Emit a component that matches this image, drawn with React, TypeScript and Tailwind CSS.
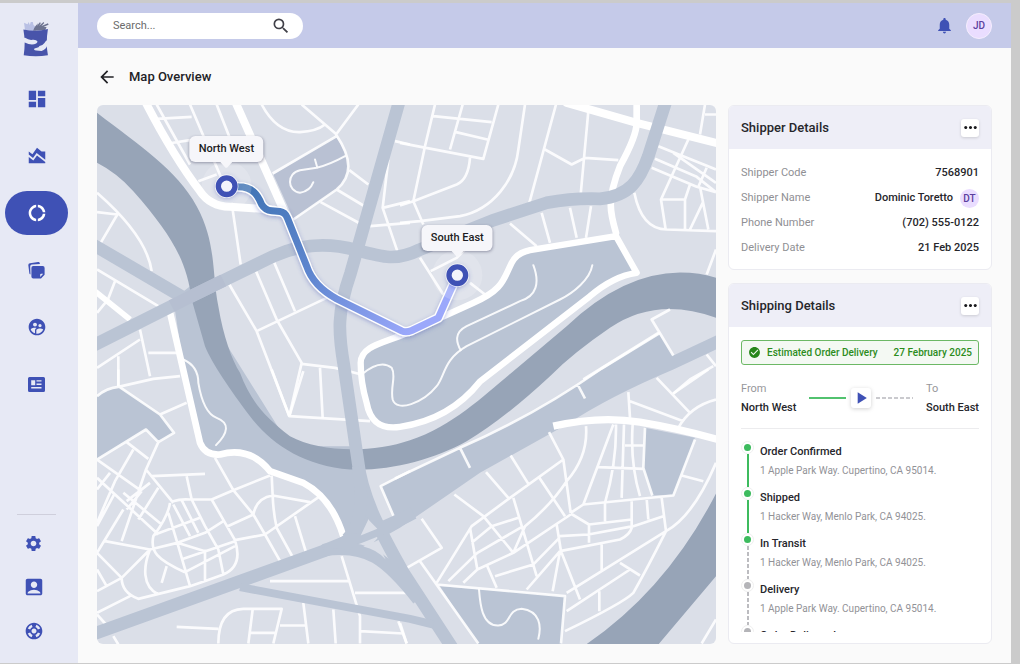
import type { ReactNode } from "react";
import {
  MdAccountBox,
  MdAreaChart,
  MdArrowBack,
  MdCheckCircle,
  MdDashboard,
  MdDonutLarge,
  MdMoreHoriz,
  MdNotifications,
  MdPlayArrow,
  MdSearch,
  MdSettings,
  MdSupervisedUserCircle,
  MdSupport,
} from "react-icons/md";

function Logo() {
  return (
    <svg viewBox="70 60 80 110" className="h-[37px] w-[27px]" aria-hidden="true">
      <path d="M76 92 73 68l10 5 4-7 3 9 3-9h6l2 9 6 4 2 15z" fill="#b9c0e4" />
      <path d="M100 92c4-12 10-17 15-22l-4 8 9-11 3 2-5 8 13-11 2 3-8 9 19-8 2 4-15 6 9 1-4 9z" fill="#6d7390" />
      <path d="M71 88q37 8 73-1-7 42 0 78-36 6-72 0 6-40-1-77z" fill="#4854aa" />
      <path d="M70 113l6 0q12 8 22 6 12-1 15 5 0 3-4 6-14 7-34-3l-5 1z" fill="#e7e9f5" />
      <path d="M147 119q-10 1-14 10-6 8-14 8l-3 4-12 4q-4 5 5 6l16 1q14-4 17-16l5-1z" fill="#e7e9f5" />
    </svg>
  );
}

function NotesIcon() {
  return (
    <svg viewBox="0 0 17 17" className="size-[17px]" fill="currentColor" aria-hidden="true">
      <path d="M.3 3.1A2 2 0 0 1 2 1.2L10 0a1.500 1.500 0 0 1 1.800 1.200l.1.700-8 .6a2 2 0 0 0-1.700 2l.3 8.100A1.700 1.700 0 0 1 1.300 11z" />
      <path
        fillRule="evenodd"
        d="M5.300 4h9.400A1.900 1.900 0 0 1 16.600 6v6.700L13 16.400H5.300a1.900 1.900 0 0 1-1.900-1.900V6A1.900 1.900 0 0 1 5.300 4zm6.900 10.900 3-3.200h-2.100a.9.9 0 0 0-.9.900z"
      />
    </svg>
  );
}

function NewsIcon() {
  return (
    <svg viewBox="0 0 17 15" className="h-[15px] w-[17px]" fill="currentColor" aria-hidden="true">
      <path
        fillRule="evenodd"
        d="M1.500 0h14A1.500 1.500 0 0 1 17 1.500v12a1.500 1.500 0 0 1-1.500 1.500h-14A1.500 1.500 0 0 1 0 13.500v-12A1.500 1.500 0 0 1 1.500 0zM3.200 3.200v5h4v-5zm5.300 0v1.400h5V3.200zm0 3.300v1.400h5V6.500zM3.200 10v1.400h10.300V10z"
      />
    </svg>
  );
}

const primaryNav: { label: string; icon: ReactNode; active?: boolean }[] = [
  { label: "Dashboard", icon: <MdDashboard size={22} /> },
  { label: "Analytics", icon: <MdAreaChart size={22} /> },
  { label: "Tracking", icon: <MdDonutLarge size={20} />, active: true },
  { label: "Notes", icon: <NotesIcon /> },
  { label: "Team", icon: <MdSupervisedUserCircle size={20} /> },
  { label: "News", icon: <NewsIcon /> },
];

const secondaryNav: { label: string; icon: ReactNode }[] = [
  { label: "Settings", icon: <MdSettings size={19} /> },
  { label: "Account", icon: <MdAccountBox size={22} /> },
  { label: "Support", icon: <MdSupport size={20} /> },
];

function Sidebar() {
  return (
    <aside className="flex w-[78px] shrink-0 flex-col bg-[#e7e9f5] pb-[10px] text-[#3f51b5]">
      <a href="#home" aria-label="Home" className="mt-[17px] ml-[23px] w-[27px]">
        <Logo />
      </a>
      <nav aria-label="Primary" className="mt-5 flex flex-col gap-[13px] pl-[5px]">
        {primaryNav.map((item) => (
          <a
            key={item.label}
            href={"#" + item.label.toLowerCase()}
            aria-label={item.label}
            aria-current={item.active ? "page" : undefined}
            className={
              item.active
                ? "flex h-11 w-[63px] items-center justify-center rounded-full bg-[#3f51b5] text-white"
                : "flex h-11 w-[63px] items-center justify-center rounded-full"
            }
          >
            {item.icon}
          </a>
        ))}
      </nav>
      <nav aria-label="Secondary" className="mt-auto flex flex-col">
        <hr className="mb-[6px] ml-[17px] w-[39px] border-[#cfcfdc]" />
        {secondaryNav.map((item) => (
          <a
            key={item.label}
            href={"#" + item.label.toLowerCase()}
            aria-label={item.label}
            className="flex h-11 w-[67px] items-center justify-center"
          >
            {item.icon}
          </a>
        ))}
      </nav>
    </aside>
  );
}

function Header() {
  return (
    <header className="flex h-[45px] shrink-0 items-center bg-[#c5cae9] px-[19px]">
      <form className="flex h-[26px] w-[206px] items-center rounded-full bg-white pr-3 pl-4" onSubmit={(e) => e.preventDefault()}>
        <input
          aria-label="Search"
          placeholder="Search..."
          className="h-full min-w-0 flex-1 bg-transparent text-[11px] leading-[26px] text-[#222] outline-none placeholder:text-[#6b6b6b]"
        />
        <button type="submit" aria-label="Submit search" className="text-[#404048]">
          <MdSearch size={20} />
        </button>
      </form>
      <button aria-label="Notifications" className="ml-auto text-[#3f51b5]">
        <MdNotifications size={19} />
      </button>
      <button
        aria-label="Profile"
        className="ml-3 flex size-[26px] items-center justify-center rounded-full border border-[#f6eefe] bg-[#eaddff] text-[10px] font-medium text-[#5b3f9e]"
      >
        JD
      </button>
    </header>
  );
}

const minorNW = [
  "M200 15 300 195", "M300 15 400 250", "M380 15 425 130", "M200 58 305 52", "M235 132 300 122", "M325 245 380 225",
  "M425 310 452 495", "M515 15Q560 100 630 98 680 95 705 75", "M635 15 740 105",
  "M805 15 738 105Q775 160 775 200 775 240 740 270L610 360", "M548 222 740 110",
  "M778 212 835 255", "M740 270 820 318", "M692 308 810 372", "M840 380 960 370", "M895 180 878 325 922 455",
  "M878 325 960 305", "M915 125 960 135", "M21 280Q170 410 185 515", "M21 338 82 345 32 430", "M21 510 205 620",
  "M75 545 50 610", "M21 640 50 605", "M150 690 180 830", "M21 805 150 720", "M85 770V860", "M175 760 260 760",
  "M418 555 500 695 598 950", "M500 695 710 595", "M498 515 560 660 635 790 598 950", "M553 490 615 635",
  "M635 793 735 805 815 825", "M690 805 698 955",
];

const minorNE = [
  "M105 15 75 140 40 305 70 375", "M0 130 250 178 295 15", "M188 15 150 150", "M100 50 275 68", "M168 98 262 120",
  "M210 175Q205 240 170 255L40 305 0 318", "M375 15 355 150C345 240 280 330 180 350L60 365 0 370", "M468 15 388 310",
  "M565 35 542 285", "M435 150 515 195 555 175 655 182", "M330 372 410 440", "M425 340 450 430", "M510 325 530 415",
  "M573 320 558 415", "M60 475 130 585", "M92 515 170 475 205 440", "M210 550 255 585", "M775 140 948 210",
  "M765 178 890 232 948 278", "M755 205 890 262 948 278", "M820 160 948 250", "M865 120 783 300 797 390", "M783 300H855V390",
  "M870 255 855 300", "M920 205 895 262", "M908 310 870 390", "M900 262 925 390",
  "M703 280C715 340 740 390 800 390L948 395", "M915 15 900 105", "M915 45H948", "M948 450 920 525",
  "M810 630 755 660 820 768", "M775 700 550 840", "M920 765 948 800", "M940 800 870 840 820 882",
];

const minorSW = [
  "M21 80Q50 55 85 52L190 28 270 20", "M85 0V50", "M85 50 210 135 290 100", "M210 135 252 190 205 218 168 180 21 270",
  "M205 218 168 300 95 515", "M110 218 175 268", "M21 270 155 365", "M130 240 75 335 21 460", "M21 325 205 495",
  "M60 310 21 360", "M155 365 110 420", "M168 300 250 400", "M185 320 345 313", "M290 320 305 390", "M100 370 215 465",
  "M75 370 21 470", "M205 355 145 450", "M100 420 21 550", "M180 340 110 395", "M45 515 180 540", "M545 0 598 140 840 155",
  "M640 5 598 140", "M375 265 430 362 490 435 525 495 575 583", "M365 390 430 362 540 318",
  "M545 318 548 378Q550 430 560 475L612 570", "M490 435Q500 385 548 378L660 398", "M690 380 525 495 435 512",
  "M615 440 650 555", "M410 472 490 435", "M21 550 95 625 180 540", "M21 665 95 625", "M21 600 50 650",
  "M21 730 120 680", "M21 735 48 765", "M70 800 85 825",
  "M250 395Q270 388 300 390H365L435 512Q460 590 400 615 340 637 300 650L145 688Q95 670 95 625",
  "M240 400Q235 440 190 500C180 545 200 570 285 608", "M180 540C160 590 155 650 205 675", "M215 640 230 590",
  "M180 540 262 520 345 490 400 455", "M195 495 330 445", "M235 430 262 520 300 650", "M250 405 300 500", "M275 392 325 490",
  "M305 390 345 470 385 540 400 615", "M285 608 435 530", "M280 568 435 515", "M345 540V637", "M262 520 345 545",
  "M755 560 810 740V822", "M540 635H775", "M795 670H960", "M260 772 385 778", "M385 822Q385 720 460 718H575L550 822",
  "M488 720 475 822", "M480 790H555", "M570 768H650", "M640 700 655 822", "M730 720 737 822", "M810 785 940 792",
  "M925 755 950 822", "M960 305 872 350 915 450",
];

const minorSE = [
  "M-15 327 180 235Q400 140 605 -3L780 -110", "M180 235 210 295", "M533 45 555 87", "M770 25 870 130", "M820 72 925 0",
  "M685 68 690 145", "M690 95 850 155", "M835 175Q870 110 948 90", "M447 188 490 270 512 430",
  "M558 170Q565 260 500 335 450 410 375 470L340 550", "M490 270 330 385 215 470 110 640", "M332 258 385 343",
  "M258 308 325 385", "M163 375 250 440 340 550", "M418 325 495 440", "M340 385 410 620", "M210 475 232 600",
  "M215 520 275 470 355 445", "M145 635 232 550 370 470", "M190 640 232 600 340 550 512 435", "M262 590 290 655",
  "M285 620 400 585", "M380 660 480 545", "M395 590 478 505", "M470 465 483 545 540 690", "M480 545 458 665",
  "M480 545 660 510Q690 495 695 475V395", "M478 500 565 495 700 470 790 440", "M512 432 567 465V520",
  "M567 465 695 450", "M512 430 550 405 820 378 885 210", "M550 405 640 165", "M648 165Q650 280 615 400V455",
  "M672 165 665 385", "M698 165Q690 280 720 380", "M735 175 730 295 757 378", "M675 228H733", "M595 293 730 298",
  "M740 388 745 450", "M785 385 798 485", "M845 318 910 335", "M948 280Q880 440 798 485L500 670",
  "M798 485Q740 600 700 670 670 700 495 785", "M605 525V605", "M660 580 720 618", "M690 600 500 725", "M598 665V725",
  "M110 645 495 680 483 822", "M60 575 235 822", "M15 598 125 535 65 448", "M948 750 905 822", "M0 760 20 822",
];

const bigPark =
  "M1578 410 1640 520Q1570 530 1500 590L1170 846Q1080 960 930 982C870 990 840 965 830 910Q812 850 812 790C812 740 880 730 940 705L1150 610C1240 570 1240 540 1265 490Q1280 460 1320 452Z";

const routePath =
  "M410 260 445 262C490 262 505 290 515 315Q525 332 545 334L570 336Q585 338 592 355L650 500Q670 560 740 598L935 694Q948 700 965 693L1045 655 1102 527";

function CityMap() {
  return (
    <svg
      viewBox="21 15 1857 1620"
      preserveAspectRatio="xMidYMid slice"
      className="absolute inset-0 size-full"
      role="img"
      aria-label="Map with the route from North West to South East"
    >
      <defs>
        <linearGradient id="route" gradientUnits="userSpaceOnUse" x1="440" y1="260" x2="960" y2="700">
          <stop offset="0" stopColor="#3f73b3" />
          <stop offset=".5" stopColor="#5f86cf" />
          <stop offset="1" stopColor="#9ba8fb" />
        </linearGradient>
        <filter id="glow" x="-50%" y="-50%" width="200%" height="200%">
          <feDropShadow dx="0" dy="4" stdDeviation="6" floodColor="#3f51b5" floodOpacity=".4" />
        </filter>
      </defs>
      <rect x="21" y="15" width="1857" height="1620" fill="#dbdfe8" />

      <g fill="#bac4d4">
        <path d="M250 600 285 830 330 1040Q345 1070 390 1065 480 1040 540 1115L640 1150Q730 1200 765 1320L830 1300 840 1220 800 1040H600L300 560Z" />
        <path d="M550 225 738 110Q775 170 775 200 775 240 740 270L610 358Z" fill="#b9c1d3" />
        <path d="M21 890Q50 865 85 862L210 945 252 1000 205 1028 168 990 21 1080Z" />
        <path d={bigPark} />
        <path d="M872 1160 1110 1045Q1330 950 1535 807L1705 700 1750 768 1878 708V750L1750 810Q1560 890 1430 975L1170 1120 930 1285 850 1330 915 1260Z" />
        <path d="M1665 985 1815 1015 1750 1185 1687 1188 1660 1105Z" />
        <path d="M1050 1460 1425 1490 1413 1635H1165Z" />
      </g>

      <g fill="#97a4b7">
        <path d="M21 40C150 140 260 210 320 320 380 430 365 520 385 620 400 710 425 780 450 820 480 900 520 950 600 1010 690 1060 850 1060 960 1022 1090 980 1190 880 1270 815L1430 680Q1600 520 1770 519 1830 519 1878 535V655Q1700 590 1560 685 1450 760 1380 830 1240 960 1130 1025C1030 1080 900 1115 780 1110 640 1100 540 1030 480 950 420 870 365 790 345 740L305 600C290 480 240 400 130 275Q80 220 21 190Z" />
        <path d="M1878 1182Q1730 1470 1488 1635H1705L1878 1430Z" />
      </g>

      <g fill="none" stroke="#fff" strokeLinejoin="round" strokeLinecap="round">
        <g strokeWidth="8" strokeOpacity=".88" strokeLinecap="butt">
          <path d={minorNW.join("")} />
          <path d={minorNE.join("")} transform="translate(930 0)" />
          <path d={minorSW.join("")} transform="translate(0 810)" />
          <path d={minorSE.join("")} transform="translate(930 810)" />
        </g>
        <g strokeWidth="24">
          <path d="M165 5Q250 170 330 275 360 320 420 322L550 330" />
          <path d="M435 5 580 330" />
          <path d={bigPark} strokeWidth="19" />
          <path d="M238 630 330 1030Q345 1068 390 1065 480 1040 540 1115L640 1150Q725 1195 760 1310" strokeWidth="20" />
          <path d="M15 575 120 660" strokeWidth="17" strokeLinecap="butt" />
          <path d="M1430 10 1640 70 1890 133" />
          <path d="M1640 5V70Q1640 110 1590 200C1550 300 1560 340 1578 400" strokeWidth="20" />
          <path d="M1390 980Q1530 948 1650 968T1890 1022" strokeWidth="22" strokeLinecap="butt" />
        </g>
        <g strokeWidth="6" strokeOpacity=".9">
          <path d="M765 170Q720 195 680 205L630 212C590 220 590 275 630 280Q660 275 670 248M675 180 682 205" />
          <path d="M280 780Q325 800 325 850 340 940 380 955C420 970 415 1000 378 1037" />
          <path d="M1330 497C1350 550 1340 590 1290 605L1130 680C1090 700 1100 730 1112 752" />
          <path d="M1507 497C1500 540 1450 580 1410 600L1130 740C1060 780 1065 830 1040 860 1000 910 920 940 908 900 900 860 920 830 905 805 880 785 845 800 815 825" />
          <path d="M1167 1470C1170 1510 1175 1580 1225 1578 1265 1575 1250 1530 1295 1528 1350 1535 1355 1580 1345 1618" />
        </g>
      </g>

      <g fill="none" stroke="#bac4d4" strokeWidth="38">
        <path d="M10 738 300 592 550 470C640 430 720 430 800 452S920 485 990 450L1210 362 1370 310Q1450 295 1530 298C1620 290 1650 240 1675 170L1728 5" />
        <path d="M10 436 290 600" />
        <path d="M928 5 782 520C740 640 745 700 762 800L803 1080C815 1200 880 1310 940 1420L1090 1650" />
        <path d="M10 1604 700 1355C780 1320 870 1295 970 1240" />
        <path d="M700 1352C830 1330 890 1380 985 1500" />
        <path d="M805 1100Q830 1270 770 1320" />
        <path d="M450 1463 960 1558 1030 1575" strokeWidth="24" />
        <path d="M245 620 300 592 400 543" stroke="#b6bfd1" />
      </g>
      <path d="M765 1305 700 1345 780 1350 830 1300Z" fill="#bac4d4" />
      <path d="M835 1260 812 1308 862 1288ZM820 1341 860 1325 887 1380Q860 1350 820 1341Z" fill="#dbdfe8" />

      <g fill="none" strokeLinejoin="round">
        <path d={routePath} stroke="#fff" strokeWidth="29" filter="url(#glow)" />
        <path d={routePath} stroke="url(#route)" strokeWidth="21" />
      </g>

      {[
        [410, 260],
        [1102, 527],
      ].map(([x, y]) => (
        <g key={x}>
          <circle cx={x} cy={y} r="75" fill="#fff" fillOpacity=".18" />
          <circle cx={x} cy={y} r="35" fill="#fff" fillOpacity=".8" filter="url(#glow)" />
          <circle cx={x} cy={y} r="25" fill="#f3f3fb" stroke="#3f51b5" strokeWidth="16" />
        </g>
      ))}
    </svg>
  );
}

function PinLabel({ name, place }: { name: string; place: string }) {
  return (
    <div className={"absolute -translate-x-1/2 -translate-y-full pb-6 " + place}>
      <div className="relative rounded-md bg-[#f6f6fa] px-[9px] py-[5px] text-[11px] leading-4 font-medium whitespace-nowrap text-[#1c1c22] shadow-[0_1px_3px_rgba(60,60,90,0.45)]">
        {name}
        <svg viewBox="0 0 12 6" className="absolute top-full left-1/2 h-[6px] w-3 -translate-x-1/2" aria-hidden="true">
          <path d="M0 0h12L7 5.400q-1 .8-2 0z" fill="#f6f6fa" />
        </svg>
      </div>
    </div>
  );
}

function CardHeader({ title }: { title: string }) {
  return (
    <div className="flex h-[43px] shrink-0 items-center justify-between bg-[#eeeef7] px-3">
      <h2 className="text-[13px] font-medium text-[#26262b]">{title}</h2>
      <button
        aria-label={title + " options"}
        className="flex size-[18px] items-center justify-center rounded-[3px] bg-white text-[#1b1b1f] shadow-[0_1px_3px_rgba(0,0,0,0.15)]"
      >
        <MdMoreHoriz size={19} className="shrink-0" />
      </button>
    </div>
  );
}

function DetailRow({ label, children }: { label: string; children: ReactNode }) {
  return (
    <div className="flex h-[25px] items-center justify-between">
      <dt className="text-[#8f8f94]">{label}</dt>
      <dd className="flex items-center gap-[7px] font-medium text-[#26262b]">{children}</dd>
    </div>
  );
}

function ShipperCard() {
  return (
    <section className="shrink-0 overflow-hidden rounded-md border border-[#ebebf1] bg-white">
      <CardHeader title="Shipper Details" />
      <dl className="px-3 pt-3 pb-2 text-[11px]">
        <DetailRow label="Shipper Code">7568901</DetailRow>
        <DetailRow label="Shipper Name">
          Dominic Toretto
          <span className="flex size-[19px] items-center justify-center rounded-full bg-[#eaddff] text-[10px] text-[#5b3f9e]">DT</span>
        </DetailRow>
        <DetailRow label="Phone Number">(702) 555-0122</DetailRow>
        <DetailRow label="Delivery Date">21 Feb 2025</DetailRow>
      </dl>
    </section>
  );
}

const doneLine = "bg-[#3dbb5e]";
const pendingLine = "bg-[repeating-linear-gradient(180deg,#bcbcc0_0_4px,transparent_4px_6px)]";

const steps: { title: string; address?: string; dot: string; line: string }[] = [
  { title: "Order Confirmed", address: "1 Apple Park Way. Cupertino, CA 95014.", dot: "bg-[#3dbb5e]", line: doneLine },
  { title: "Shipped", address: "1 Hacker Way, Menlo Park, CA 94025.", dot: "bg-[#3dbb5e]", line: doneLine },
  { title: "In Transit", address: "1 Hacker Way, Menlo Park, CA 94025.", dot: "bg-[#3dbb5e]", line: pendingLine },
  { title: "Delivery", address: "1 Apple Park Way. Cupertino, CA 95014.", dot: "bg-[#b4b4b8]", line: pendingLine },
  { title: "Order Delivered", dot: "bg-[#b4b4b8]", line: "bg-transparent" },
];

function ShippingCard() {
  return (
    <section className="flex min-h-0 flex-1 flex-col overflow-hidden rounded-md border border-[#ebebf1] bg-white">
      <CardHeader title="Shipping Details" />
      <div className="flex min-h-0 flex-1 flex-col px-3 pt-[13px] pb-[11px]">
        <div className="flex h-[25px] shrink-0 items-center rounded-[3px] border border-[#6cb865] bg-[#f4f9f3] px-[6px] text-[10px] font-medium text-[#2c8c1c]">
          <MdCheckCircle size={13} className="mr-[6px] text-[#27861a]" />
          <span>Estimated Order Delivery</span>
          <span className="ml-auto">27 February 2025</span>
        </div>

        <div className="mt-[14px] flex shrink-0 items-center justify-between border-b border-[#ececee] pb-[11px] text-[11px] leading-[19px]">
          <div>
            <div className="text-[#97979b]">From</div>
            <div className="font-medium text-[#26262b]">North West</div>
          </div>
          <div className="flex items-center gap-[5px]">
            <span className="h-[2px] w-[37px] bg-[#52c26f]" />
            <button
              aria-label="Play route"
              className="flex size-5 items-center justify-center rounded-[3px] bg-white text-[#3f51b5] shadow-[0_1px_4px_rgba(0,0,0,0.18)]"
            >
              <MdPlayArrow size={20} className="shrink-0" />
            </button>
            <span className="h-[2px] w-[37px] bg-[repeating-linear-gradient(90deg,#cacace_0_4px,transparent_4px_6px)]" />
          </div>
          <div>
            <div className="text-[#97979b]">To</div>
            <div className="font-medium text-[#26262b]">South East</div>
          </div>
        </div>

        <ol className="mt-3 min-h-0 flex-1 overflow-y-auto [scrollbar-width:none]">
          {steps.map((step) => (
            <li key={step.title} className="flex h-[46px] gap-[6px]">
              <div className="flex w-[13px] flex-col items-center">
                <span className="flex size-[13px] shrink-0 items-center justify-center rounded-full border border-[#efefef] bg-white">
                  <span className={"size-[7px] rounded-full " + step.dot} />
                </span>
                <span className={"w-px flex-1 px-px " + step.line} />
              </div>
              <div className="pt-[3px]">
                <h3 className="text-[11px] leading-4 font-medium text-[#26262b]">{step.title}</h3>
                {step.address && <p className="mt-[3px] text-[10px] leading-4 text-[#929297]">{step.address}</p>}
              </div>
            </li>
          ))}
        </ol>
      </div>
    </section>
  );
}

export default function App() {
  return (
    <div className="flex h-screen bg-[#cbcbcb] pt-[3px] pr-[9px] pb-px font-['Roboto',sans-serif]">
      <Sidebar />
      <div className="flex min-w-0 flex-1 flex-col bg-[#fafafa]">
        <Header />
        <main className="flex min-h-0 flex-1 flex-col px-[19px] pb-[19px]">
          <div className="flex h-[57px] shrink-0 items-center gap-3">
            <button aria-label="Back" className="text-[#222226]">
              <MdArrowBack size={20} />
            </button>
            <h1 className="text-[13px] font-medium text-[#222226]">Map Overview</h1>
          </div>
          <div className="flex min-h-0 flex-1 gap-3">
            <div className="relative min-w-0 flex-1 overflow-hidden rounded-md">
              <CityMap />
              <PinLabel name="North West" place="left-[20.9%] top-[15.1%]" />
              <PinLabel name="South East" place="left-[58.2%] top-[31.6%]" />
            </div>
            <div className="flex w-[264px] shrink-0 flex-col gap-[13px]">
              <ShipperCard />
              <ShippingCard />
            </div>
          </div>
        </main>
      </div>
    </div>
  );
}
